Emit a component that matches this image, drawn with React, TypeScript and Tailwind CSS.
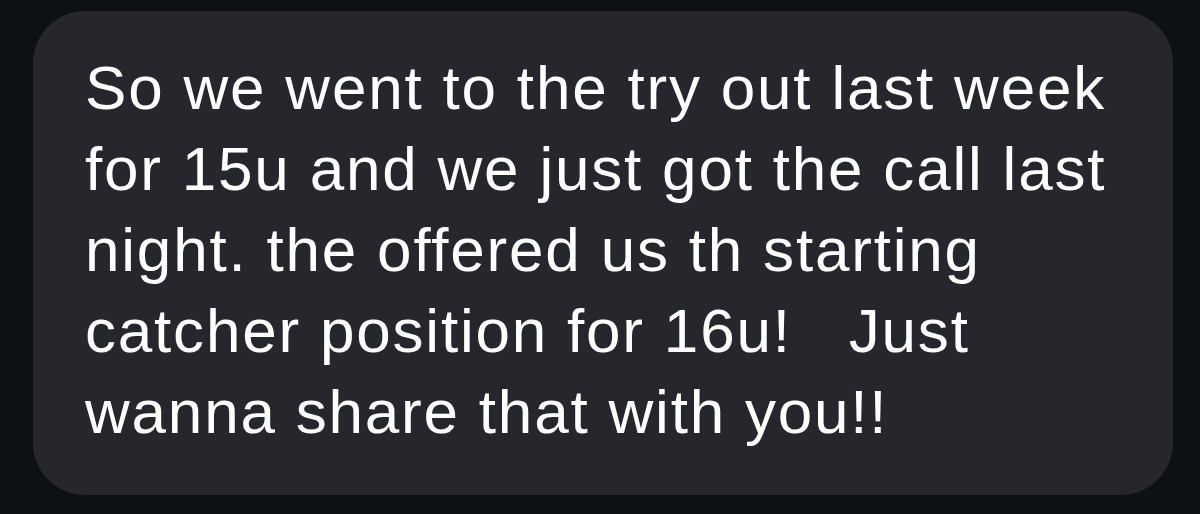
export default function App() {
  return (
    <div className="w-[1200px] h-[514px] bg-[#0d1014] pl-[33px] pt-[11px]">
      <div className="w-[1140px] h-[484px] rounded-[52px] bg-[#25272c] pl-[52px] pt-[36px] text-white font-['Liberation_Sans',Arial,sans-serif] text-[62px] leading-[81px] tracking-[1.8px]">
        <p>So we went to the try out last week</p>
        <p>for 15u and we just got the call last</p>
        <p>night. the offered us th starting</p>
        <p className="whitespace-pre">catcher position for 16u!   Just</p>
        <p>wanna share that with you!!</p>
      </div>
    </div>
  );
}
